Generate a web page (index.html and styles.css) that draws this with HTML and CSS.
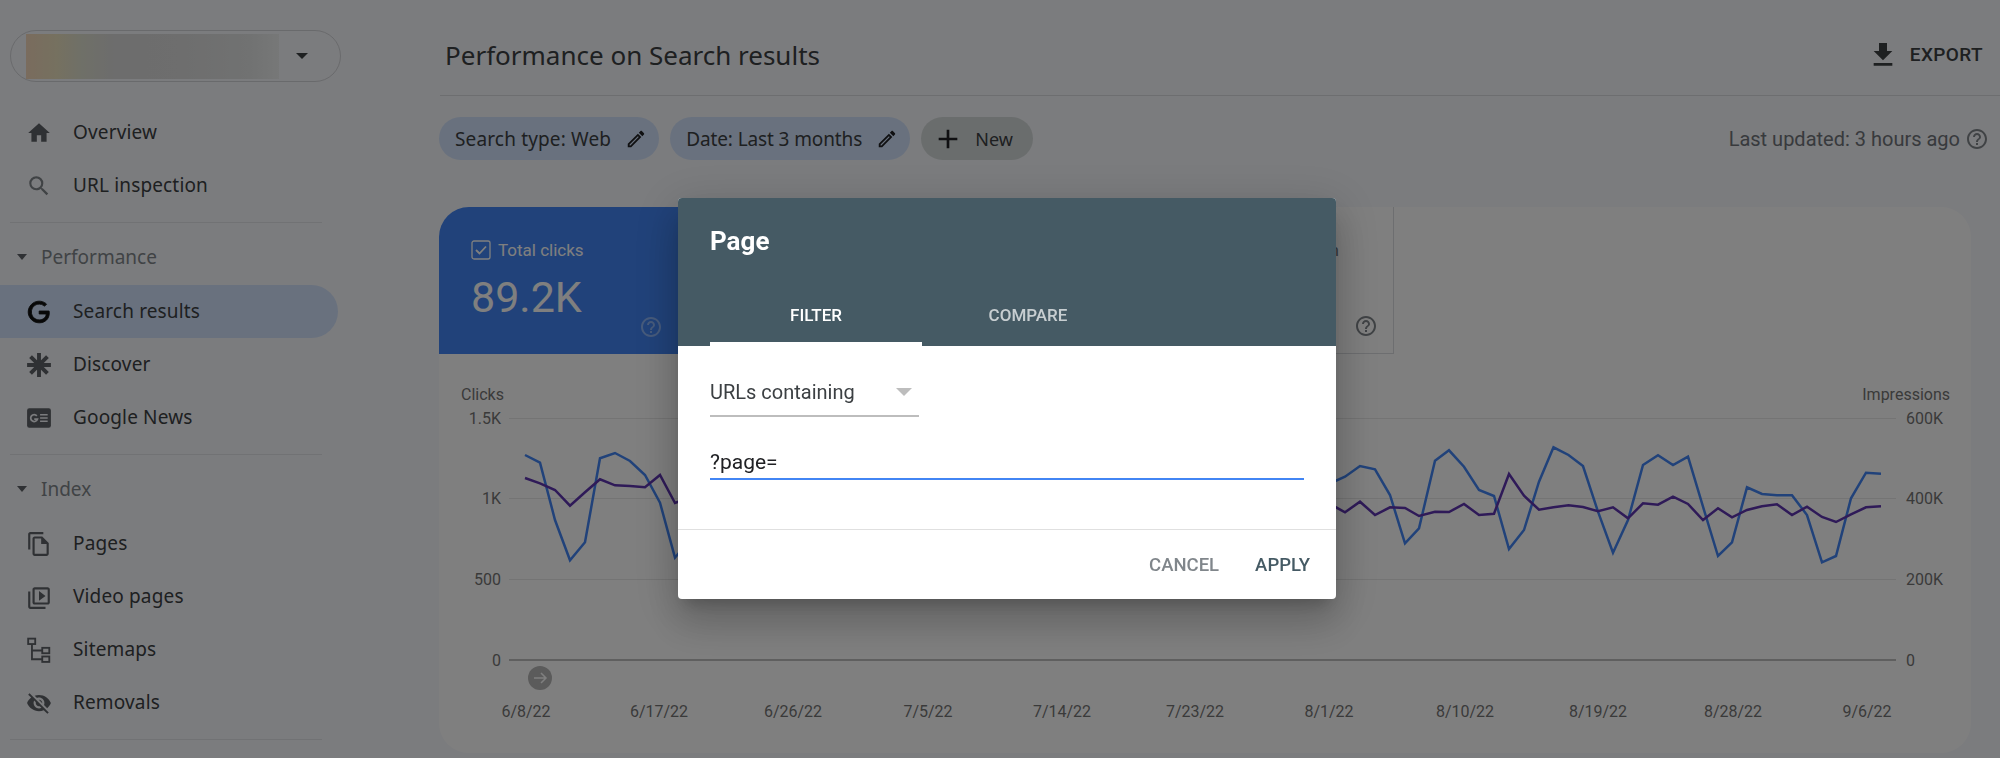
FILE: index.html
```html
<!DOCTYPE html>
<html lang="en">
<head>
    <meta charset="UTF-8">
    <title>Performance on Search results</title>
    <link rel="stylesheet" href="styles.css">
</head>
<body>

<svg class="icon-defs" width="0" height="0">
  <symbol id="i-home" viewBox="0 0 24 24"><path d="M10 20v-6h4v6h5v-8h3L12 3 2 12h3v8z"/></symbol>
  <symbol id="i-search" viewBox="0 0 24 24"><path d="M15.5 14h-.79l-.28-.27A6.471 6.471 0 0 0 16 9.5 6.5 6.5 0 1 0 9.5 16c1.61 0 3.09-.59 4.23-1.57l.27.28v.79l5 4.99L20.49 19l-4.99-5zm-6 0C7.01 14 5 11.99 5 9.5S7.01 5 9.5 5 14 7.01 14 9.5 11.99 14 9.5 14z"/></symbol>
  <symbol id="i-g" viewBox="0 0 24 24"><path d="M21.35 11.1h-9.17v2.73h6.51c-.33 3.81-3.5 5.44-6.5 5.44C8.36 19.27 5 16.25 5 12c0-4.1 3.2-7.27 7.2-7.27 3.09 0 4.9 1.97 4.9 1.97L19 4.72S16.56 2 12.1 2C6.42 2 2.03 6.8 2.03 12c0 5.05 4.13 10 10.22 10 5.35 0 9.25-3.67 9.25-9.09 0-1.15-.15-1.81-.15-1.81z"/></symbol>
  <symbol id="i-discover" viewBox="0 0 24 24"><path d="M12 1v22M1 12h22M4.2 4.2l15.6 15.6M19.8 4.2L4.2 19.8" fill="none" stroke="currentColor" stroke-width="3.6"/></symbol>
  <symbol id="i-news" viewBox="0 0 24 24"><rect x="1" y="3" width="22" height="18" rx="2"/><path d="M10 10a3.2 3.2 0 1 0 .6 3H7.6" fill="none" stroke="#f7f8fc" stroke-width="1.6"/><path d="M13 9h7M13 12h7M13 15h7" stroke="#f7f8fc" stroke-width="1.6"/></symbol>
  <symbol id="i-pages" viewBox="0 0 24 24"><path d="M16 1H4c-1.1 0-2 .9-2 2v14h2V3h12V1zm-1 4H8c-1.1 0-1.99.9-1.99 2L6 21c0 1.1.89 2 1.99 2H19c1.1 0 2-.9 2-2V11l-6-6zM8 21V7h6v5h5v9H8z"/></symbol>
  <symbol id="i-video" viewBox="0 0 24 24"><path d="M4 6H2v14c0 1.1.9 2 2 2h14v-2H4V6zm16-4H8c-1.1 0-2 .9-2 2v12c0 1.1.9 2 2 2h12c1.1 0 2-.9 2-2V4c0-1.1-.9-2-2-2zm0 14H8V4h12v12zM12 5.5v9l6-4.5z" transform="translate(0 1)"/></symbol>
  <symbol id="i-sitemap" viewBox="0 0 24 24"><g fill="none" stroke="currentColor" stroke-width="1.7"><rect x="2" y="1.5" width="6.5" height="5"/><rect x="15" y="10" width="6.5" height="5"/><rect x="15" y="18" width="6.5" height="5"/><path d="M5.5 6.500V20.500H15M5.500 12.500H15"/></g></symbol>
  <symbol id="i-eye-off" viewBox="0 0 24 24"><path d="M12 7c2.76 0 5 2.24 5 5 0 .65-.13 1.26-.36 1.83l2.92 2.92c1.51-1.26 2.7-2.89 3.43-4.75-1.73-4.39-6-7.5-11-7.5-1.4 0-2.74.25-3.98.7l2.16 2.16C10.74 7.13 11.35 7 12 7zM2 4.270l2.280 2.280.46.46C3.080 8.300 1.780 10.020 1 12c1.730 4.390 6 7.500 11 7.500 1.550 0 3.030-.3 4.380-.84l.42.42L19.730 22 21 20.730 3.270 3 2 4.270zM7.530 9.800l1.550 1.550c-.05.21-.08.43-.08.65 0 1.660 1.340 3 3 3 .22 0 .44-.03.65-.08l1.550 1.550c-.67.33-1.410.53-2.200.53-2.760 0-5-2.240-5-5 0-.79.2-1.530.53-2.200zm4.310-.78l3.150 3.150.02-.16c0-1.660-1.340-3-3-3l-.17.01z"/></symbol>
  <symbol id="i-pencil" viewBox="0 0 24 24"><path d="M14.060 9.020l.92.92L5.920 19H5v-.92l9.060-9.060M17.660 3c-.25 0-.51.1-.7.29l-1.830 1.830 3.750 3.750 1.830-1.830c.39-.39.39-1.020 0-1.410l-2.340-2.340c-.2-.2-.45-.29-.71-.29zm-3.600 3.190L3 17.250V21h3.750L17.810 9.940l-3.750-3.750z"/></symbol>
  <symbol id="i-plus" viewBox="0 0 24 24"><path d="M19 13h-6v6h-2v-6H5v-2h6V5h2v6h6v2z"/></symbol>
  <symbol id="i-download" viewBox="0 0 24 24"><path d="M19 9h-4V3H9v6H5l7 7 7-7zM5 18v2h14v-2H5z"/></symbol>
  <symbol id="i-help" viewBox="0 0 24 24"><path d="M11 18h2v-2h-2v2zm1-16C6.480 2 2 6.480 2 12s4.480 10 10 10 10-4.480 10-10S17.520 2 12 2zm0 18c-4.410 0-8-3.590-8-8s3.590-8 8-8 8 3.590 8 8-3.590 8-8 8zm0-14c-2.210 0-4 1.790-4 4h2c0-1.100.9-2 2-2s2 .9 2 2c0 2-3 1.750-3 5h2c0-2.250 3-2.500 3-5 0-2.210-1.790-4-4-4z"/></symbol>
  <symbol id="i-check" viewBox="0 0 20 20"><rect x="1" y="1" width="18" height="18" rx="2" fill="none" stroke="currentColor" stroke-width="1.300"/><path d="M5 10l3.500 3.500L15 6.500" fill="none" stroke="currentColor" stroke-width="1.800"/></symbol>
</svg>

<div class="page">

  <aside class="sidebar">
    <div class="property-pill">
      <div class="property-blur"></div>
      <span class="pill-arrow"></span>
    </div>

    <nav class="nav-first">
      <a class="nav-row"><svg class="nav-icon"><use href="#i-home"/></svg><span>Overview</span></a>
      <a class="nav-row"><svg class="nav-icon icon-grey"><use href="#i-search"/></svg><span>URL inspection</span></a>
    </nav>
    <div class="nav-divider"></div>

    <div class="nav-head"><span class="head-caret"></span>Performance</div>
    <a class="nav-row active"><svg class="nav-icon icon-black"><use href="#i-g"/></svg><span>Search results</span></a>
    <a class="nav-row"><svg class="nav-icon"><use href="#i-discover"/></svg><span>Discover</span></a>
    <a class="nav-row"><svg class="nav-icon"><use href="#i-news"/></svg><span>Google News</span></a>
    <div class="nav-divider"></div>

    <div class="nav-head"><span class="head-caret"></span>Index</div>
    <a class="nav-row"><svg class="nav-icon"><use href="#i-pages"/></svg><span>Pages</span></a>
    <a class="nav-row"><svg class="nav-icon"><use href="#i-video"/></svg><span>Video pages</span></a>
    <a class="nav-row"><svg class="nav-icon"><use href="#i-sitemap"/></svg><span>Sitemaps</span></a>
    <a class="nav-row"><svg class="nav-icon"><use href="#i-eye-off"/></svg><span>Removals</span></a>
    <div class="nav-divider"></div>
  </aside>

  <main class="content">
    <header class="top-bar">
      <h1 class="page-title">Performance on Search results</h1>
      <a class="export-btn"><svg class="export-icon"><use href="#i-download"/></svg>EXPORT</a>
    </header>

    <div class="filter-bar">
      <span class="chip">Search type: Web<svg class="chip-edit"><use href="#i-pencil"/></svg></span>
      <span class="chip chip-date">Date: Last 3 months<svg class="chip-edit"><use href="#i-pencil"/></svg></span>
      <span class="chip chip-new"><svg class="chip-plus"><use href="#i-plus"/></svg>New</span>
      <span class="last-updated">Last updated: 3 hours ago<svg class="help-icon"><use href="#i-help"/></svg></span>
    </div>

    <section class="chart-card">
      <div class="metric-tabs">
        <div class="metric metric-clicks">
          <div class="metric-label"><svg class="metric-check"><use href="#i-check"/></svg>Total clicks</div>
          <div class="metric-value">89.2K</div>
          <svg class="help-icon metric-help"><use href="#i-help"/></svg>
        </div>
        <div class="metric"></div>
        <div class="metric"></div>
        <div class="metric metric-last">
          <div class="metric-label label-end">Average position</div>
          <svg class="help-icon metric-help"><use href="#i-help"/></svg>
        </div>
      </div>

      <!-- viewBox uses page coordinates so the points read like the screenshot -->
      <svg class="chart" viewBox="439 354 1532 399" width="1532" height="399">
        <g class="grid-lines">
          <path d="M509 418.500H1896M509 498.500H1896M509 579.500H1896"/>
        </g>
        <path class="axis-line" d="M509 660H1896"/>

        <g class="axis-text">
          <text x="461" y="400">Clicks</text>
          <text x="501" y="424" text-anchor="end">1.5K</text>
          <text x="501" y="504" text-anchor="end">1K</text>
          <text x="501" y="585" text-anchor="end">500</text>
          <text x="501" y="666" text-anchor="end">0</text>

          <text x="1950" y="400" text-anchor="end">Impressions</text>
          <text x="1906" y="424">600K</text>
          <text x="1906" y="504">400K</text>
          <text x="1906" y="585">200K</text>
          <text x="1906" y="666">0</text>

          <text x="526" y="717" text-anchor="middle">6/8/22</text>
          <text x="659" y="717" text-anchor="middle">6/17/22</text>
          <text x="793" y="717" text-anchor="middle">6/26/22</text>
          <text x="928" y="717" text-anchor="middle">7/5/22</text>
          <text x="1062" y="717" text-anchor="middle">7/14/22</text>
          <text x="1195" y="717" text-anchor="middle">7/23/22</text>
          <text x="1329" y="717" text-anchor="middle">8/1/22</text>
          <text x="1465" y="717" text-anchor="middle">8/10/22</text>
          <text x="1598" y="717" text-anchor="middle">8/19/22</text>
          <text x="1733" y="717" text-anchor="middle">8/28/22</text>
          <text x="1867" y="717" text-anchor="middle">9/6/22</text>
        </g>

        <polyline class="line-clicks" points="525,455 540,462.700 555,520 570,560.300 585,542.300 600,458.300 615,453 630,461 645,475 660,502.700 675,557.700 683,548 1336,480.700 1345,476.700 1360,466 1375,469.300 1390,495 1405,543.300 1419,528.300 1435,460.700 1449,450.300 1464,466.700 1479,490 1494,496 1509,549 1524,530 1539,481.700 1553.500,447.300 1568.500,455 1583,466 1598,511.700 1613,552.700 1628,520 1643,465 1658,455.300 1673,465 1688,456.700 1703,506.700 1718,556 1732,542.300 1747,487.300 1762,494 1777,495.300 1792,495.300 1807,515 1822,562.300 1836,556 1851,498.300 1866,472.700 1881,473.700"/>
        <polyline class="line-impr" points="525,478 540,483.300 555,490 570,505.700 585,492.300 600,479.300 615,485.300 630,486 645,487.300 660,475 675,503 683,500 1336,507.300 1345,512.300 1360,501.700 1375,515 1390,507.300 1405,508 1419,516 1435,511.700 1449,512 1464,504 1479,515 1494,513.700 1509,474 1524,495.700 1539,509.700 1553.500,507.300 1568.500,505.300 1583,507 1598,511.300 1613,507.300 1628,518.300 1643,503.300 1658,504.700 1673,496.700 1688,504 1703,520 1718,508.300 1732,517.300 1747,510 1762,506.300 1777,504.300 1792,515 1807,506.700 1822,517 1836,522 1851,514.300 1866,507.300 1881,506.300"/>

        <circle class="annot-dot" cx="540" cy="678" r="12"/>
        <path class="annot-arrow" d="M534 678H546M541 673l5 5-5 5"/>
      </svg>
    </section>
  </main>
</div>

<div class="overlay"></div>

<div class="dialog">
  <div class="dialog-head">
    <div class="dialog-title">Page</div>
    <div class="dialog-tabs">
      <div class="dialog-tab tab-on">FILTER</div>
      <div class="dialog-tab">COMPARE</div>
    </div>
  </div>
  <div class="dialog-body">
    <div class="select-box">URLs containing<span class="select-arrow"></span></div>
    <div class="text-field">?page=</div>
  </div>
  <div class="dialog-foot">
    <a class="btn-cancel">CANCEL</a>
    <a class="btn-apply">APPLY</a>
  </div>
</div>

</body>
</html>
```

FILE: styles.css
```css
html, body {
    margin: 0;
    padding: 0;
    height: 758px;
    overflow: hidden;
}

body {
    font-family: Roboto, "Liberation Sans", sans-serif;
    background-color: #f7f8fc;
    color: #3c4043;
}

.icon-defs {
    position: absolute;
}

.page {
    display: grid;
    grid-template-columns: 439px 1fr;
    height: 758px;
}

/* sidebar */

.sidebar {
    padding-top: 30px;
    font-family: "Noto Sans", sans-serif;
}

.property-pill {
    display: flex;
    align-items: center;
    box-sizing: border-box;
    width: 331px;
    height: 52px;
    margin-left: 10px;
    padding-left: 15px;
    border: 1px solid #d3d5d9;
    border-radius: 26px;
}

.property-blur {
    width: 253px;
    height: 45px;
    background: linear-gradient(90deg, #f4d8bc 0%, #ece2c0 12%, #dfe0d0 22%, #dadada 35%, #dcdcdc 60%, #e2e4e4 88%, #eef0f0 100%);
}

.pill-arrow {
    margin-left: 17px;
    border-top: 6px solid #3c4043;
    border-left: 6px solid transparent;
    border-right: 6px solid transparent;
}

.nav-first {
    margin-top: 24px;
}

.nav-row {
    display: flex;
    align-items: center;
    gap: 21px;
    width: 338px;
    box-sizing: border-box;
    height: 53px;
    padding-left: 26px;
    font-size: 19px;
    letter-spacing: 0.15px;
    color: #3c4043;
}

.nav-row span {
    padding-bottom: 1px;
}

.nav-row.active {
    background-color: #d2e3fc;
    border-radius: 0 27px 27px 0;
}

.nav-icon {
    width: 26px;
    height: 26px;
    flex: none;
    fill: #5f6368;
    color: #5f6368;
}

.icon-grey {
    fill: #80868b;
}

.icon-black {
    fill: #111111;
    stroke: #111111;
    stroke-width: 0.8;
}

.nav-divider {
    width: 312px;
    height: 1px;
    margin: 10px 0 0 10px;
    background-color: #e3e4e8;
}

.nav-head {
    display: flex;
    align-items: center;
    gap: 14px;
    height: 44px;
    margin: 12px 0 6px;
    padding-left: 17px;
    font-size: 19px;
    color: #80868b;
}

.head-caret {
    border-top: 6px solid #5f6368;
    border-left: 5.5px solid transparent;
    border-right: 5.5px solid transparent;
}

/* main column */

.content {
    min-width: 0;
}

.top-bar {
    display: flex;
    align-items: center;
    justify-content: space-between;
    box-sizing: border-box;
    height: 96px;
    padding: 14px 17px 0 5px;
    border-bottom: 1px solid #dadce0;
    margin-left: 1px;
}

.page-title {
    margin: 0;
    font-family: "Noto Sans", sans-serif;
    font-size: 26px;
    font-weight: 400;
    color: #3c4043;
}

.export-btn {
    display: flex;
    align-items: center;
    gap: 11px;
    font-size: 19px;
    font-weight: 500;
    letter-spacing: 0.4px;
    color: #3c4043;
}

.export-icon {
    width: 32px;
    height: 32px;
    fill: #3c4043;
}

.filter-bar {
    display: flex;
    align-items: center;
    gap: 11px;
    margin-top: 21px;
    padding-right: 11px;
}

.chip {
    display: flex;
    align-items: center;
    height: 43px;
    padding: 0 12px 0 16px;
    border-radius: 22px;
    background-color: #d2e3fc;
    font-family: "Noto Sans", sans-serif;
    font-size: 19px;
    letter-spacing: 0.15px;
    color: #3c4043;
}

.chip-date {
    letter-spacing: -0.11px;
}

.chip-edit {
    width: 22px;
    height: 22px;
    margin-left: 14px;
    fill: #202124;
}

.chip-new {
    padding: 0 20px 0 11px;
    background-color: #d5dbdb;
    font-size: 18px;
    letter-spacing: 0;
}

.chip-plus {
    width: 32px;
    height: 32px;
    margin-right: 11px;
    fill: #202124;
}

.last-updated {
    display: flex;
    align-items: center;
    gap: 5px;
    margin-left: auto;
    font-size: 20px;
    color: #70757a;
}

.help-icon {
    width: 24px;
    height: 24px;
    fill: #80868b;
}

/* chart card */

.chart-card {
    width: 1532px;
    height: 546px;
    margin-top: 47px;
    background-color: #ffffff;
    border-radius: 30px;
}

.metric-tabs {
    display: grid;
    grid-template-columns: repeat(4, 238.75px);
    height: 147px;
}

.metric {
    position: relative;
    box-sizing: border-box;
    padding: 33px 0 0 32px;
    color: #70757a;
}

.metric-clicks {
    background-color: #4285f4;
    border-radius: 30px 0 0 0;
    color: #ffffff;
}

.metric-last {
    border-right: 1px solid #dadce0;
    border-bottom: 1px solid #dadce0;
}

.metric-label {
    display: flex;
    align-items: center;
    gap: 7px;
    font-size: 17px;
}

.label-end {
    justify-content: flex-end;
    padding-right: 54px;
}

.metric-check {
    width: 20px;
    height: 20px;
}

.metric-value {
    margin-top: 12px;
    font-size: 43px;
    line-height: 50px;
}

.metric-help {
    position: absolute;
    right: 15px;
    bottom: 15px;
}

.metric-clicks .metric-help {
    fill: rgba(255, 255, 255, 0.4);
}

.chart {
    display: block;
}

.grid-lines path {
    stroke: #e8e8e8;
    fill: none;
}

.axis-line {
    stroke: #a8a8a8;
    stroke-width: 1.5;
    fill: none;
}

.axis-text text {
    font-family: Roboto, sans-serif;
    font-size: 16px;
    fill: #757575;
}

.line-clicks {
    fill: none;
    stroke: #4285f4;
    stroke-width: 2.5;
}

.line-impr {
    fill: none;
    stroke: #5e35b1;
    stroke-width: 2.5;
}

.annot-dot {
    fill: #b6b6b6;
}

.annot-arrow {
    fill: none;
    stroke: #ffffff;
    stroke-width: 1.500;
}

/* modal */

.overlay {
    position: fixed;
    top: 0;
    left: 0;
    right: 0;
    bottom: 0;
    background-color: rgba(0, 0, 0, 0.5);
}

.dialog {
    position: fixed;
    left: 678px;
    top: 198px;
    width: 658px;
    height: 401px;
    display: flex;
    flex-direction: column;
    background-color: #ffffff;
    border-radius: 4px;
    box-shadow: 0 11px 15px -7px rgba(0, 0, 0, 0.2), 0 24px 38px 3px rgba(0, 0, 0, 0.14), 0 9px 46px 8px rgba(0, 0, 0, 0.12);
}

.dialog-head {
    height: 148px;
    padding: 0 32px;
    background-color: #455a64;
    border-radius: 4px 4px 0 0;
    color: #ffffff;
}

.dialog-title {
    padding-top: 27px;
    font-size: 26px;
    font-weight: 700;
    line-height: 32px;
}

.dialog-tabs {
    display: flex;
    margin-top: 35px;
}

.dialog-tab {
    width: 212px;
    height: 54px;
    box-sizing: border-box;
    padding-top: 13px;
    text-align: center;
    font-size: 17px;
    font-weight: 500;
    line-height: 20px;
    color: rgba(255, 255, 255, 0.7);
}

.tab-on {
    color: #ffffff;
    border-bottom: 4px solid #ffffff;
}

.dialog-body {
    flex: 1;
    padding: 0 32px;
    border-bottom: 1px solid #e0e0e0;
}

.select-box {
    display: flex;
    align-items: center;
    justify-content: space-between;
    box-sizing: border-box;
    width: 209px;
    height: 71px;
    padding: 22px 7px 0 0;
    border-bottom: 2px solid #bdbdbd;
    font-size: 20px;
    color: #3c4043;
}

.select-arrow {
    border-top: 8px solid #bdbdbd;
    border-left: 8px solid transparent;
    border-right: 8px solid transparent;
}

.text-field {
    box-sizing: border-box;
    height: 63px;
    padding-top: 33px;
    border-bottom: 2px solid #4285f4;
    font-size: 21px;
    line-height: 24px;
    color: #202124;
}

.dialog-foot {
    display: flex;
    justify-content: flex-end;
    align-items: center;
    gap: 36px;
    height: 69px;
    padding-right: 26px;
    font-size: 18.5px;
    font-weight: 500;
}

.btn-cancel {
    color: #80868b;
}

.btn-apply {
    color: #455a64;
}
```
